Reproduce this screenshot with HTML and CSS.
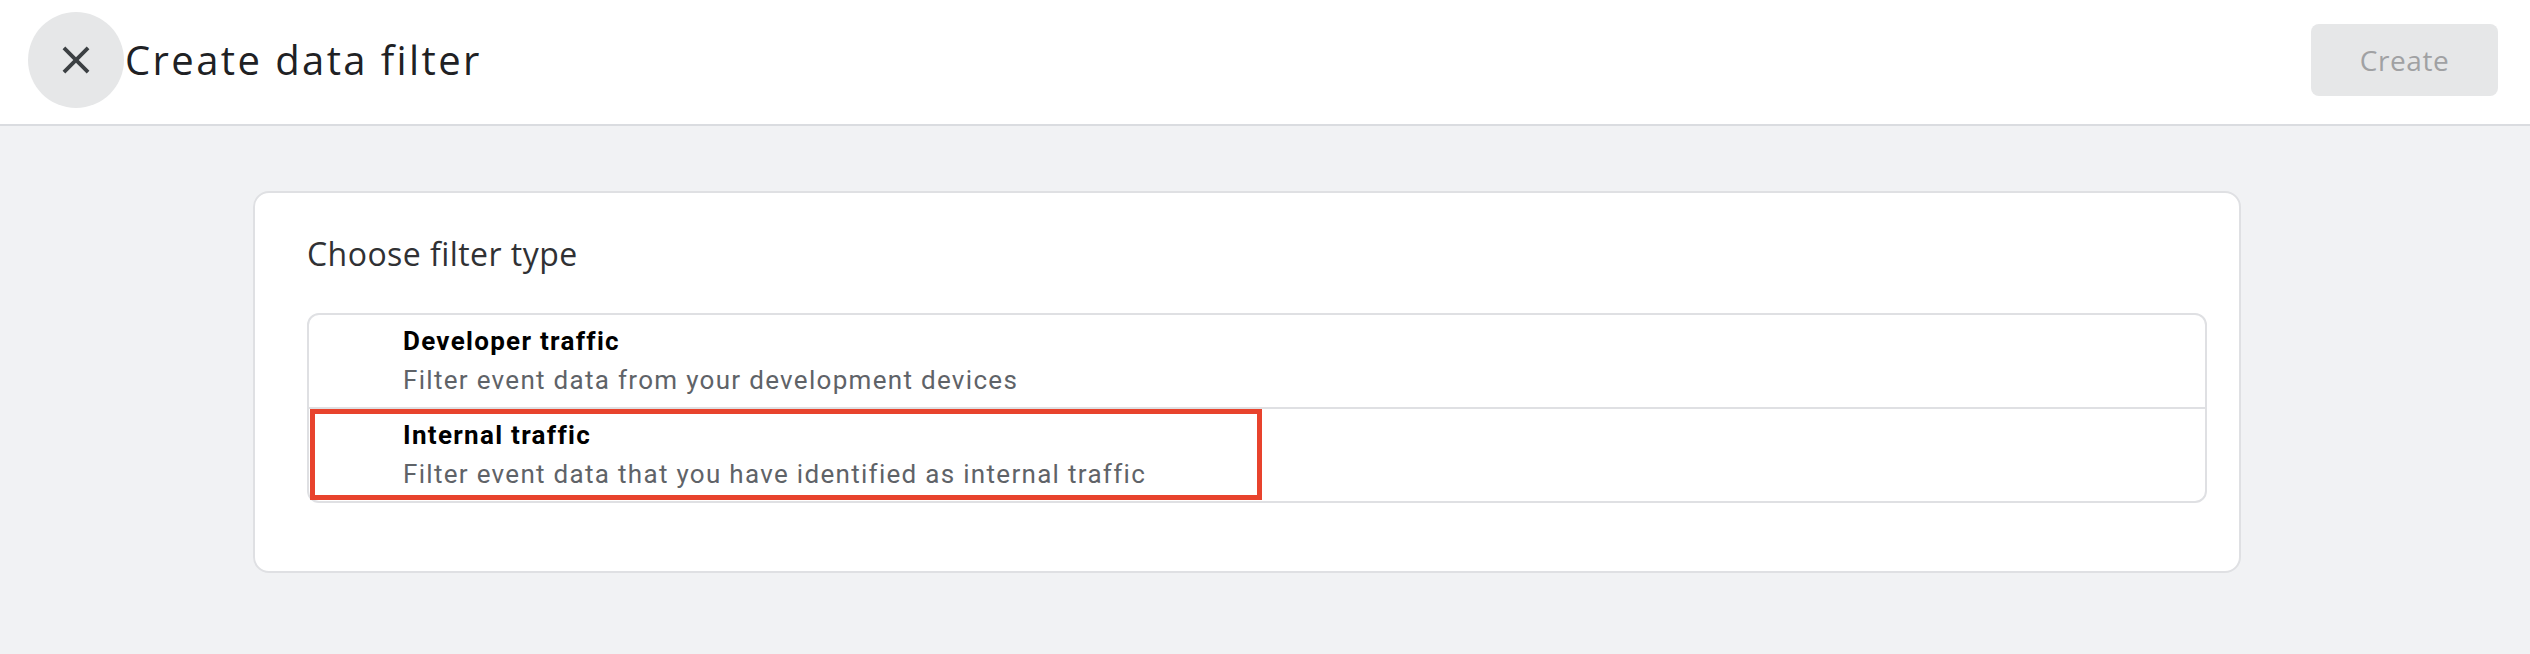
FILE: index.html
```html
<!DOCTYPE html>
<html lang="en">
<head>
<meta charset="utf-8">
<title>Create data filter</title>
<link rel="stylesheet" href="styles.css">
</head>
<body>
<header class="topbar">
  <button class="close-btn" aria-label="Close">
    <svg class="close-icon" viewBox="0 0 24 24" width="46" height="46" aria-hidden="true">
      <path d="M19 6.41L17.59 5 12 10.59 6.41 5 5 6.41 10.59 12 5 17.59 6.41 19 12 13.41 17.59 19 19 17.59 13.41 12z"/>
    </svg>
  </button>
  <h1 class="title">Create data filter</h1>
  <div class="spacer"></div>
  <button class="create-btn" disabled>Create</button>
</header>
<main class="main">
  <section class="card">
    <h2 class="card-title">Choose filter type</h2>
    <div class="options">
      <div class="option">
        <div class="option-name">Developer traffic</div>
        <div class="option-desc">Filter event data from your development devices</div>
      </div>
      <div class="option option-highlighted">
        <div class="option-name">Internal traffic</div>
        <div class="option-desc">Filter event data that you have identified as internal traffic</div>
        <div class="highlight-box"></div>
      </div>
    </div>
  </section>
</main>
</body>
</html>
```
FILE: styles.css
```css
* { box-sizing: border-box; }
html, body {
  margin: 0;
  padding: 0;
  background: #f1f2f4;
  height: 100%;
}
body {
  font-family: Roboto, "Liberation Sans", sans-serif;
  color: #202124;
}
.topbar {
  height: 126px;
  background: #ffffff;
  border-bottom: 2px solid #dadce0;
  display: flex;
  align-items: center;
  padding: 0 32px 4px 28px;
}
.close-btn {
  width: 96px;
  height: 96px;
  border-radius: 50%;
  border: none;
  background: #e6e7e8;
  display: flex;
  align-items: center;
  justify-content: center;
  padding: 0;
  flex: none;
}
.close-icon { fill: #3c4043; display: block; }
.title {
  margin: 0 0 0 1px;
  font-family: "Open Sans", Roboto, sans-serif;
  font-weight: 400;
  font-size: 40px;
  line-height: 48px;
  letter-spacing: 2.4px;
  color: #202124;
}
.spacer { flex: 1; }
.create-btn {
  width: 187px;
  height: 72px;
  border: none;
  border-radius: 8px;
  background: #e6e7e8;
  color: #a0a1a3;
  font-family: "Open Sans", Roboto, sans-serif;
  font-size: 28px;
  font-weight: 500;
  letter-spacing: 0.6px;
  padding: 0;
}
.main {
  padding: 65px 289px 81px 253px;
}
.card {
  background: #ffffff;
  border: 2px solid #dfe0e3;
  border-radius: 16px;
  padding: 41px 32px 68px 52px;
}
.card-title {
  margin: 0 0 39px 0;
  font-family: "Open Sans", Roboto, sans-serif;
  font-weight: 400;
  font-size: 32px;
  line-height: 40px;
  letter-spacing: 0.45px;
  color: #303134;
}
.options {
  border: 2px solid #dfe0e3;
  border-radius: 12px;
}
.option {
  position: relative;
  padding: 7px 0 7px 94px;
}
.option + .option {
  border-top: 2px solid #dfe0e3;
}
.option-name {
  font-size: 26px;
  line-height: 39px;
  font-weight: 700;
  letter-spacing: 1.3px;
  color: #000000;
}
.option-desc {
  font-size: 26px;
  line-height: 39px;
  letter-spacing: 1.3px;
  color: #5f6368;
}
.highlight-box {
  position: absolute;
  left: 1px;
  top: 0;
  width: 952px;
  height: 91px;
  border: 5px solid #e8432d;
}
```
